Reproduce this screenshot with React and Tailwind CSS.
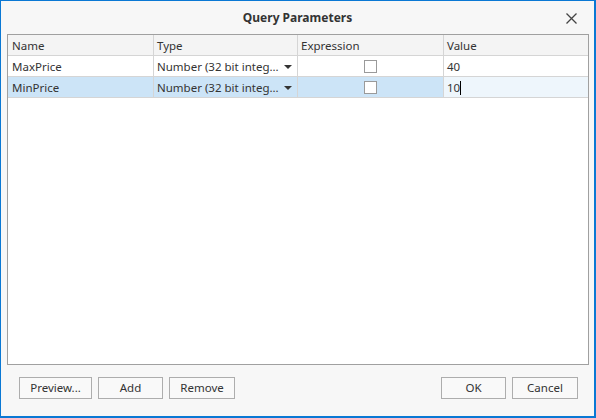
import React from "react";

const font = { fontFamily: '"Segoe UI", "Noto Sans", "Open Sans", sans-serif' };

function Checkbox() {
  return <div className="w-[13px] h-[13px] border border-[#9a9a9a] bg-white" />;
}

function Arrow() {
  return (
    <svg width="8" height="4" viewBox="0 0 8 4" className="block">
      <path d="M0 0 L8 0 L4 4 Z" fill="#333" />
    </svg>
  );
}

function Row({ name, value, selected }) {
  const bg = selected ? "bg-[#cce4f7]" : "bg-white";
  return (
    <div className={`flex h-[21px] border-b border-[#d5d5d5] ${bg}`}>
      <div className="w-[146px] shrink-0 border-r border-[#d5d5d5] pl-[4px] pt-px flex items-center">{name}</div>
      <div className="w-[144px] shrink-0 border-r border-[#d5d5d5] pl-[3px] pr-[5px] pt-px flex items-center justify-between">
        <span>Number (32 bit integ...</span>
        <Arrow />
      </div>
      <div className="w-[146px] shrink-0 border-r border-[#d5d5d5] flex items-center justify-center">
        <Checkbox />
      </div>
      <div className={`flex-1 pl-[3px] pt-px flex items-center ${selected ? "bg-[#eef6fc]" : ""}`}>
        <span>{value}</span>
        {selected && <span className="inline-block w-px h-[14px] bg-black" />}
      </div>
    </div>
  );
}

function Btn({ children, w }) {
  return (
    <div
      className="h-[22px] border border-[#adadad] bg-[#f9f9f9] flex items-center justify-center text-[11.5px] text-[#333]"
      style={{ width: w }}
    >
      {children}
    </div>
  );
}

export default function App() {
  return (
    <div
      className="w-[596px] h-[418px] bg-[#f7f7f7] border border-[#0a78d4] border-r-2 border-b-2 flex flex-col text-[11.5px] text-[#333]"
      style={font}
    >
      <div className="h-[33px] shrink-0 flex items-center justify-center relative">
        <span className="font-bold text-[12px] text-[#333]">Query Parameters</span>
        <svg width="11" height="11" viewBox="0 0 11 11" className="absolute right-[17px] top-[12px]">
          <path d="M0.5 0.5 L10.5 10.5 M10.5 0.5 L0.5 10.5" stroke="#444" strokeWidth="1.3" />
        </svg>
      </div>
      <div className="mx-[6px] mr-[5px] h-[331px] shrink-0 border border-[#a0a0a0] bg-white flex flex-col">
        <div className="flex h-[21px] border-b border-[#d5d5d5] bg-[#f4f4f4]">
          <div className="w-[146px] shrink-0 border-r border-[#d5d5d5] pl-[4px] pt-px flex items-center">Name</div>
          <div className="w-[144px] shrink-0 border-r border-[#d5d5d5] pl-[3px] pt-px flex items-center">Type</div>
          <div className="w-[146px] shrink-0 border-r border-[#d5d5d5] pl-[3px] pt-px flex items-center">Expression</div>
          <div className="flex-1 pl-[3px] pt-px flex items-center">Value</div>
        </div>
        <Row name="MaxPrice" value="40" />
        <Row name="MinPrice" value="10" selected />
      </div>
      <div className="flex items-center mt-[12px] pl-[18px] pr-[16px]">
        <div className="flex gap-[6px]">
          <Btn w={73}>Preview...</Btn>
          <Btn w={65}>Add</Btn>
          <Btn w={66}>Remove</Btn>
        </div>
        <div className="flex gap-[6px] ml-auto">
          <Btn w={65}>OK</Btn>
          <Btn w={66}>Cancel</Btn>
        </div>
      </div>
    </div>
  );
}
